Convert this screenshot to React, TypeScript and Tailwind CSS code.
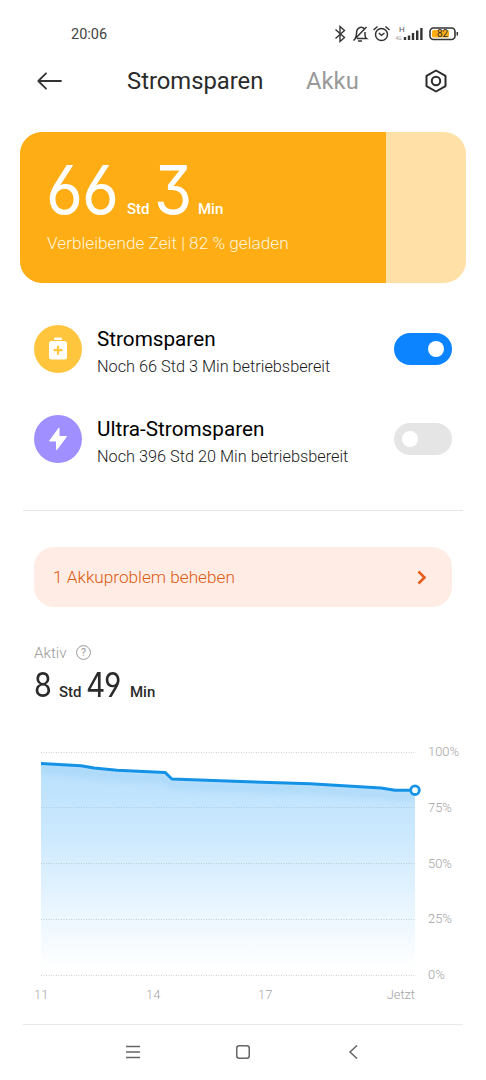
import React from 'react';

const digitStyle = "font-['Inter'] font-normal [font-feature-settings:'cv03','cv04','cv09'] whitespace-nowrap origin-left";

function StatusBar() {
  return (
    <div className="flex h-[62px] items-center justify-between pl-[71px] pr-[26px] pt-[6px]">
      <span className="pt-[2px] text-[14.5px] text-[#444]">20:06</span>
      <svg width="126" height="22" viewBox="334 23 126 22" fill="none" stroke="#333" strokeWidth="1.5">
        <path d="M335.5 29.5l9 8-4.5 4V26.500l4.5 4-9 8" strokeWidth="1.4" />
        <path d="M355 38.500c1.500-1.500 1.500-3 1.500-5 0-7 6.500-7.500 8-4M365 32v3c0 2 .8 3 1.500 3.500H357M353.500 40.500l13-13.500" />
        <path d="M358 41h4" />
        <circle cx="381.500" cy="34.500" r="6" />
        <path d="M378.800 33l2.700 2.300 3-2.300M373.500 30l4-3.500M389.500 30l-4-3.500" />
        <text x="399" y="32" fontSize="8" fill="#555" stroke="none">H</text>
        <text x="395.500" y="40" fontSize="5" fill="#999" stroke="none">4G</text>
        <path d="M405 37v3M409 35.500V40M413 33v7M417.200 30.500V40M421.400 28V40" strokeWidth="2.400" />
        <rect x="430" y="28" width="25" height="11.500" rx="3.500" strokeWidth="1.600" />
        <rect x="432" y="30" width="17" height="7.500" rx="1.500" fill="#ffad17" stroke="none" />
        <path d="M457.300 32v3.500" strokeWidth="1.500" />
        <text x="442.500" y="37.300" textAnchor="middle" fontSize="10" fill="#333" stroke="none">82</text>
      </svg>
    </div>
  );
}

function Header() {
  return (
    <header className="flex h-[38px] items-center pl-[37px] pr-[37px]">
      <svg width="26" height="20" viewBox="0 0 26 20" fill="none" stroke="#333" strokeWidth="1.8" strokeLinecap="round" strokeLinejoin="round">
        <path d="M24 10H1.500M9 2.300L1.300 10 9 17.700" />
      </svg>
      <h1 className="ml-[64px] w-[179px] pt-px text-[23.8px] text-[#2b2b2b]">Stromsparen</h1>
      <span className="pt-px text-[23.8px] text-[#999]">Akku</span>
      <svg className="ml-auto" width="26" height="26" viewBox="0 0 26 26" fill="none" stroke="#2b2b2b" strokeWidth="2" strokeLinejoin="round">
        <path d="M13 2.500l9.500 5.400v10.200L13 23.500l-9.500-5.400V7.900z" />
        <circle cx="13" cy="13" r="4.200" />
      </svg>
    </header>
  );
}

function BatteryCard() {
  return (
    <section className="mx-5 mt-8 flex h-[151px] overflow-hidden rounded-[22px] bg-[#ffe1a8]">
      <div className="w-[365.5px] bg-[#ffad14] pl-[27px] pt-[28px] text-white">
        <div className="flex h-[60px] items-baseline text-[15px] font-medium leading-[60px]">
          <span className={`${digitStyle} -ml-[1px] w-[81px] scale-x-[0.95] text-[67px] tracking-[-1px]`}>66</span>
          <span className="w-[27px]">Std</span>
          <span className={`${digitStyle} w-[44px] scale-x-[0.92] text-[67px]`}>3</span>
          <span>Min</span>
        </div>
        <p className="mt-[12px] text-[17.2px] font-light leading-[22px] text-[#fff6dd]">Verbleibende Zeit | 82 % geladen</p>
      </div>
    </section>
  );
}

function Toggle({ on }: { on: boolean }) {
  return (
    <span className={on ? 'flex h-8 w-[58px] items-center justify-end rounded-full bg-[#0d84ff] px-2' : 'flex h-8 w-[58px] items-center rounded-full bg-[#e5e5e5] px-2'}>
      <span className="size-[16px] rounded-full bg-white" />
    </span>
  );
}

function Mode({ title, detail, on, color, children }: { title: string; detail: string; on: boolean; color: string; children: React.ReactNode }) {
  return (
    <div className="flex h-[90px] items-center pl-[34px] pr-[34px]">
      <span className={`flex size-[47.5px] items-center justify-center rounded-full ${color}`}>{children}</span>
      <div className="ml-[15.5px] flex-1 pt-[6px]">
        <h2 className="text-[20.7px] leading-[26px] text-black">{title}</h2>
        <p className="mt-[3px] text-[16.3px] font-light leading-[24px] text-[#1c1c1c]">{detail}</p>
      </div>
      <Toggle on={on} />
    </div>
  );
}

function Chart() {
  const line = 'M0 19.500L40 21.700 53 24 76 26.200 124 28.400 131 35 200 37.500 269 39.700 340 44 354 46.200H374';
  return (
    <section className="pl-[41px]">
      <div className="flex h-[224px]">
        <svg className="overflow-visible" width="374" height="224" viewBox="0 0 374 224" fill="none">
          <defs>
            <linearGradient id="fill" x1="0" y1="20" x2="0" y2="224" gradientUnits="userSpaceOnUse">
              <stop offset="0" stopColor="#b8e0fd" />
              <stop offset="0.35" stopColor="#cce9fe" />
              <stop offset="0.7" stopColor="#e8f5ff" />
              <stop offset="1" stopColor="#fff" />
            </linearGradient>
            <filter id="soft" x="-10%" y="-100%" width="120%" height="400%"><feGaussianBlur stdDeviation="3" /></filter>
            <clipPath id="area"><path d={line + 'V224H0Z'} /></clipPath>
          </defs>
          <path d={line + 'V224H0Z'} fill="url(#fill)" />
          <g clipPath="url(#area)"><path d={line} transform="translate(0 6)" stroke="#8cc8f2" strokeWidth="7" opacity=".35" filter="url(#soft)" /></g>
          {[8.5, 63.500, 119.500, 175.500, 231.500].map((y) => (
            <path key={y} d={`M0 ${y}H374`} stroke="#a0afb8" strokeOpacity=".55" strokeDasharray="1 1.500" />
          ))}
          <path d={line} stroke="#1492e6" strokeWidth="3" strokeLinejoin="round" />
          <circle cx="374" cy="46.200" r="4.300" fill="#fff" stroke="#1492e6" strokeWidth="2.800" />
        </svg>
        <div className="ml-[13px] flex h-[239px] flex-col justify-between text-[12.9px] font-light leading-4 text-[#a3a3a3]">
          <span>100%</span><span>75%</span><span>50%</span><span>25%</span><span>0%</span>
        </div>
      </div>
      <div className="-ml-[7px] mt-[19px] flex w-[381px] text-[12.9px] font-light leading-4 text-[#a3a3a3]">
        <span className="w-[112px]">11</span><span className="w-[112px]">14</span><span>17</span><span className="ml-auto">Jetzt</span>
      </div>
    </section>
  );
}

export default function App() {
  return (
    <main className="flex h-[1080px] w-[486px] flex-col overflow-hidden bg-white font-['Roboto',sans-serif]">
      <StatusBar />
      <Header />
      <BatteryCard />
      <div className="mt-[21px]">
        <Mode title="Stromsparen" detail="Noch 66 Std 3 Min betriebsbereit" on color="bg-[#ffc53d]">
          <svg width="20" height="24" viewBox="0 0 20 24" fill="#fff">
            <rect x="6" y="0.500" width="8" height="2.500" rx="1" />
            <rect x="1" y="4" width="18" height="18.500" rx="2.500" />
            <path d="M10 8.700v9M5.500 13.200h9" stroke="#ffc53d" strokeWidth="2.200" />
          </svg>
        </Mode>
        <Mode title="Ultra-Stromsparen" detail="Noch 396 Std 20 Min betriebsbereit" on={false} color="bg-[#9f8fff]">
          <svg width="20" height="24" viewBox="0 0 20 24" fill="#fff" stroke="#fff" strokeLinejoin="round">
            <path d="M11 1L1.500 14H8.500V23L18.500 9.500H11z" />
          </svg>
        </Mode>
      </div>
      <div className="mx-[23px] mt-[26px] h-px shrink-0 bg-[#e5e5e5]" />
      <div className="mx-[34px] mt-[36px] flex h-[60px] shrink-0 items-center justify-between rounded-[20px] bg-[#ffede5] pl-[19px] pr-[25px]">
        <span className="pt-[2px] text-[17.2px] font-light text-[#dc590f]">1 Akkuproblem beheben</span>
        <svg width="10" height="15" viewBox="0 0 10 15" fill="none" stroke="#e85b18" strokeWidth="2.500">
          <path d="M1.500 1.500l6 6-6 6" />
        </svg>
      </div>
      <div className="mt-[36px] flex h-[20px] items-center pl-[34px] text-[15.2px] text-[#999]">
        <span className="w-[42px] pt-px font-light">Aktiv</span>
        <svg className="-translate-y-px" width="15" height="15" viewBox="0 0 15 15" fill="none" stroke="#999">
          <circle cx="7.500" cy="7.500" r="6.900" />
          <text x="7.500" y="11.200" textAnchor="middle" fontSize="10.500" fill="#999" stroke="none">?</text>
        </svg>
      </div>
      <div className="mt-[2px] flex h-[40px] items-baseline pl-[34px] text-[15px] font-medium leading-[40px] text-[#2b2b2b]">
        <span className={`${digitStyle} w-[25px] scale-x-[0.86] text-[33.500px]`}>8</span>
        <span className="w-[27px]">Std</span>
        <span className={`${digitStyle} w-[44px] scale-x-[0.89] text-[33.500px]`}>49</span>
        <span>Min</span>
      </div>
      <div className="mt-[39px]"><Chart /></div>
      <nav className="mx-[23px] mt-auto flex h-[56px] items-center justify-between border-t border-[#e9e9e9] pb-[2px] pl-[103px] pr-[105px]">
        <svg width="14" height="14" viewBox="0 0 14 14" stroke="#666" strokeWidth="1.400"><path d="M0 1.500h14M0 7h14M0 12.500h14" /></svg>
        <svg className="-translate-x-px" width="14" height="14" viewBox="0 0 14 14" fill="none" stroke="#666" strokeWidth="1.500"><rect x="0.750" y="0.750" width="12.500" height="12.500" rx="2.500" /></svg>
        <svg width="10" height="14" viewBox="0 0 10 14" fill="none" stroke="#666" strokeWidth="1.500"><path d="M9 .5L2 7l7 6.500" /></svg>
      </nav>
    </main>
  );
}
